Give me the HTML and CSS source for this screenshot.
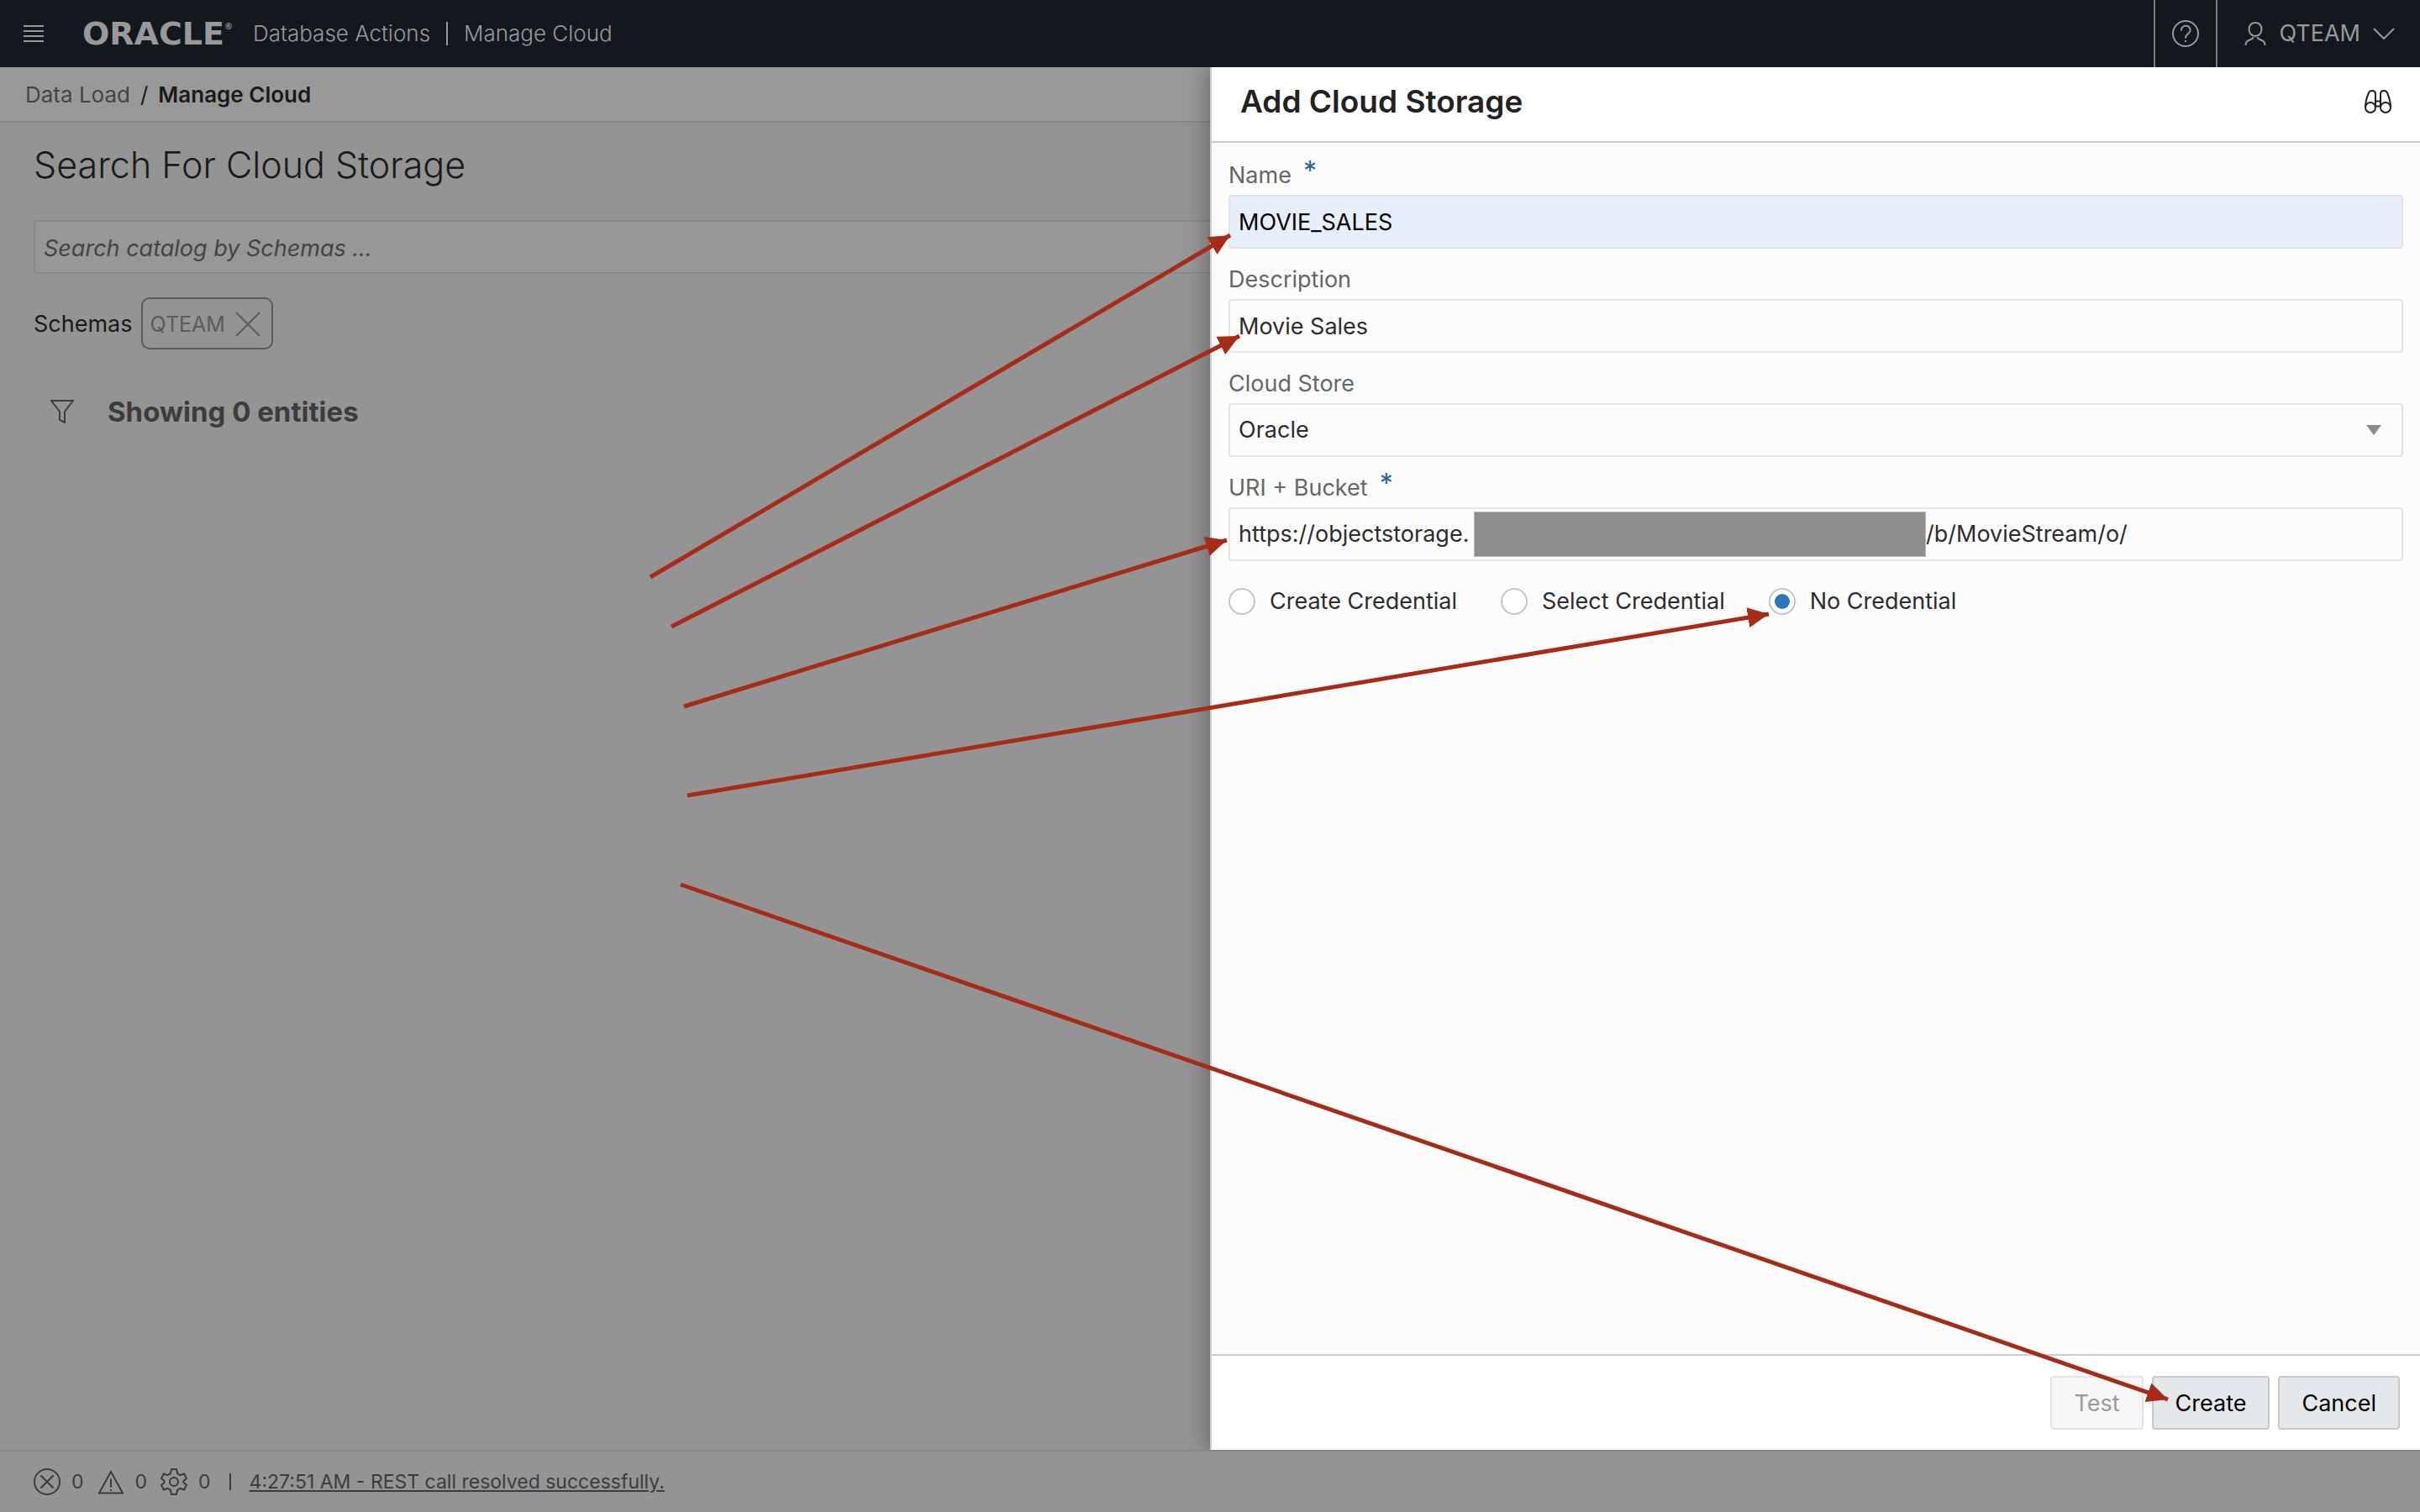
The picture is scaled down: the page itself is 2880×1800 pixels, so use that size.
FILE: index.html
```html
<!DOCTYPE html>
<html lang="en">
<head>
<meta charset="utf-8">
<title>Manage Cloud | Oracle Database Actions</title>
<meta name="viewport" content="width=device-width, initial-scale=1">
<link rel="stylesheet" href="styles.css">
</head>
<body>
<header class="topbar">
  <button class="icon-button menu" type="button" aria-label="Menu">
    <svg class="menu-icon" viewBox="0 0 24 20"><path d="M0 1h24M0 7h24M0 13h24M0 19h24"/></svg>
  </button>
  <span class="logo">ORACLE<sup class="logo-mark">®</sup></span>
  <span class="product">Database Actions</span>
  <span class="divider"></span>
  <span class="product">Manage Cloud</span>
  <div class="topbar-right">
    <button class="icon-button help" type="button" aria-label="Help">
      <svg class="icon-32" viewBox="0 0 32 32"><circle cx="16" cy="16" r="15"/><path d="M10.800 12.500C10.800 5 21.700 5 21.700 12C21.700 16 15.900 16 15.900 21.500M15.900 24v2"/></svg>
    </button>
    <button class="icon-button user" type="button">
      <svg class="user-icon" viewBox="0 0 26 28"><path d="M13 1C2.500 1 3.500 17 13 17S23.500 1 13 1ZM10.500 16.600C11 20 9 20.500 6.500 21.500C3.500 22.700 1.500 23.500 1.500 28M15.500 16.600C15 20 17 20.500 19.500 21.500C22.500 22.700 24.500 23.500 24.500 28"/></svg>
      <span>QTEAM</span>
      <svg class="chevron-icon" viewBox="0 0 26 14"><path d="M1 1l12 12L25 1"/></svg>
    </button>
  </div>
</header>

<main class="workspace">
  <section class="catalog">
    <nav class="breadcrumb" aria-label="Breadcrumb">
      <a class="crumb" href="#">Data Load</a>
      <span>/</span>
      <span class="crumb-current">Manage Cloud</span>
    </nav>
    <div class="catalog-body">
      <h1 class="catalog-title">Search For Cloud Storage</h1>
      <input class="search" type="text" aria-label="Search catalog" placeholder="Search catalog by Schemas ...">
      <div class="schemas">
        <span>Schemas</span>
        <button class="chip" type="button">QTEAM
          <svg class="close-icon" viewBox="0 0 30 30"><path d="M1 1l28 28M29 1L1 29"/></svg>
        </button>
      </div>
      <div class="results">
        <svg class="filter-icon" viewBox="0 0 28 28"><path d="M1 1h26L17 14v13l-6-3V14Z"/></svg>
        <h2 class="results-title">Showing 0 entities</h2>
      </div>
    </div>
  </section>

  <form class="drawer">
    <header class="drawer-header">
      <h2 class="drawer-title">Add Cloud Storage</h2>
      <button class="icon-button" type="button" aria-label="Tour">
        <svg class="binoculars-icon" viewBox="0 0 32 29"><circle cx="7" cy="21" r="6"/><circle cx="25" cy="21" r="6"/><path d="M1 21C1 14 3 8 5 3.500C6 1 7 1 9 1C12 1 13 2 13 5V21M31 21C31 14 29 8 27 3.500C26 1 25 1 23 1C20 1 19 2 19 5V21M13 13.500h6M13 19.500h6"/></svg>
      </button>
    </header>
    <div class="drawer-body">
      <div class="field">
        <label class="label" for="name">Name <span class="required">*</span></label>
        <input class="control control-filled" id="name" type="text" value="MOVIE_SALES">
      </div>
      <div class="field">
        <label class="label" for="description">Description</label>
        <input class="control" id="description" type="text" value="Movie Sales">
      </div>
      <div class="field">
        <label class="label" for="store">Cloud Store</label>
        <div class="select-wrap">
          <select class="control" id="store"><option>Oracle</option></select>
          <svg class="caret-icon" viewBox="0 0 18 12"><path d="M0 0h18l-9 12Z"/></svg>
        </div>
      </div>
      <div class="field">
        <label class="label" for="uri">URI + Bucket <span class="required">*</span></label>
        <div class="control uri">
          <input class="uri-host" id="uri" type="text" value="https://objectstorage.">
          <span class="redacted"></span>
          <input class="uri-path" type="text" aria-label="Bucket path" value="/b/MovieStream/o/">
        </div>
      </div>
      <div class="credentials">
        <label class="option"><input class="radio" type="radio" name="credential">Create Credential</label>
        <label class="option"><input class="radio" type="radio" name="credential">Select Credential</label>
        <label class="option"><input class="radio" type="radio" name="credential" checked>No Credential</label>
      </div>
    </div>
    <footer class="drawer-footer">
      <button class="button" type="button" disabled>Test</button>
      <button class="button" type="button">Create</button>
      <button class="button" type="button">Cancel</button>
    </footer>
  </form>
</main>

<footer class="statusbar">
  <span class="status-item"><svg class="icon-32" viewBox="0 0 32 32"><circle cx="16" cy="16" r="15"/><path d="M8.500 8.500l15 15M23.500 8.500l-15 15"/></svg>0</span>
  <span class="status-item"><svg class="icon-32" viewBox="0 0 32 32"><path d="M16 4L2 29.500h28ZM16 12.500v10M16 25v2"/></svg>0</span>
  <span class="status-item"><svg class="icon-32" viewBox="0 0 32 32"><circle cx="16" cy="16" r="5"/><path d="M13 1h6l1.200 5.200q2 .8 3.300 2L28.200 6.500L31 12l-3.500 3v2l3.500 3-2.800 5.500-4.700-1.700q-1.300 1.200-3.300 2L19 31h-6l-1.200-5.200q-2-.8-3.300-2L3.800 25.500L1 20l3.500-3v-2L1 12l2.800-5.500L8.500 8.200q1.300-1.200 3.300-2Z"/></svg>0</span>
  <span class="status-divider"></span>
  <a class="status-link" href="#">4:27:51 AM - REST call resolved successfully.</a>
</footer>

<svg class="callouts" viewBox="0 0 2880 1800" preserveAspectRatio="none" aria-hidden="true">
  <defs>
    <marker id="head" markerUnits="userSpaceOnUse" markerWidth="26" markerHeight="24" refX="25" refY="12" orient="auto"><path class="callout-head" d="M0 0L25 12L0 24Z"/></marker>
  </defs>
  <path d="M774 687L1464 280"/>
  <path d="M799 746L1475 400"/>
  <path d="M814 841L1460 643"/>
  <path d="M818 947L2105 731"/>
  <path d="M810 1053L2580 1666"/>
</svg>
</body>
</html>
```
FILE: styles.css
```css
*, *::before, *::after {
  box-sizing: border-box;
}

body {
  position: relative;
  display: grid;
  grid-template-rows: auto 1fr auto;
  min-height: 100vh;
  margin: 0;
  background: #949494;
  color: #1a1a1a;
  font-family: Inter, "Liberation Sans", sans-serif;
  font-size: 27px;
  line-height: 36px;
}

h1, h2 {
  margin: 0;
}

button, input, select {
  font: inherit;
}

svg {
  display: block;
  fill: none;
  stroke: currentColor;
  stroke-width: 2;
}

.icon-button {
  display: flex;
  align-items: center;
  padding: 0;
  border: 0;
  background: none;
  color: inherit;
}

.icon-32 {
  width: 32px;
  height: 32px;
}

/* Top bar */
.topbar {
  position: relative;
  z-index: 2;
  display: flex;
  align-items: center;
  height: 80px;
  padding-left: 28px;
  background: #13181f;
  color: #999;
}

.menu-icon {
  width: 24px;
  height: 20px;
}

.logo {
  display: flex;
  width: 203px;
  margin-left: 46px;
  font-family: "DejaVu Sans", sans-serif;
  font-size: 38px;
  font-weight: 700;
}

.logo-mark {
  font-size: 10px;
  line-height: 20px;
}

.product {
  font-size: 26px;
  font-weight: 300;
}

.divider {
  width: 2px;
  height: 28px;
  margin: 0 19px;
  background: #999;
}

.topbar-right {
  display: flex;
  align-self: stretch;
  margin-left: auto;
}

.help {
  width: 74px;
  padding: 0 20px;
  border-left: 2px solid #7d7d7d;
}

.user {
  gap: 15px;
  padding: 0 30px 0 32px;
  border-left: 2px solid #7d7d7d;
}

.user-icon {
  width: 26px;
  height: 28px;
}

.chevron-icon {
  width: 26px;
  height: 14px;
}

/* Workspace */
.workspace {
  display: grid;
  grid-template-columns: 1fr 1fr;
}

.breadcrumb {
  display: flex;
  align-items: center;
  gap: 12px;
  height: 66px;
  padding: 2px 0 0 30px;
  border-bottom: 2px solid #83888c;
  background: #999;
  font-size: 26px;
}

.crumb {
  color: #444;
  text-decoration: none;
}

.crumb-current {
  font-weight: 600;
}

.catalog-body {
  padding: 20px 0 0 40px;
}

.catalog-title {
  font-size: 43px;
  font-weight: 300;
  line-height: 60px;
}

.search {
  display: block;
  width: 100%;
  height: 64px;
  margin-top: 36px;
  padding: 2px 10px 0;
  border: 2px solid #8a8a8a;
  border-right: 0;
  border-radius: 4px 0 0 4px;
  background: #979797;
}

.search::placeholder {
  color: #444;
  font-style: italic;
}

.schemas {
  display: flex;
  align-items: baseline;
  gap: 10px;
  margin-top: 28px;
}

.chip {
  display: flex;
  align-items: center;
  gap: 12px;
  height: 62px;
  padding: 2px 13px 0 9px;
  border: 2px solid #5b5b5b;
  border-radius: 10px;
  background: none;
  color: #5b5b5b;
  font-size: 25px;
}

.close-icon {
  width: 30px;
  height: 30px;
}

.results {
  display: flex;
  align-items: center;
  gap: 40px;
  margin-top: 52px;
  padding-left: 20px;
  color: #3c3c3c;
}

.filter-icon {
  width: 28px;
  height: 28px;
}

.results-title {
  font-size: 33px;
  font-weight: 700;
  line-height: 44px;
}

/* Drawer */
.drawer {
  position: relative;
  display: flex;
  flex-direction: column;
  border-left: 2px solid #ccc;
  background: #fcfcfc;
  box-shadow: -4px 0 24px rgba(0, 0, 0, 0.3);
}

.drawer-header {
  display: flex;
  align-items: center;
  justify-content: space-between;
  height: 90px;
  padding: 0 34px 6px;
  border-bottom: 2px solid #ccc;
  background: #fff;
  color: #222;
}

.drawer-title {
  font-size: 37px;
  font-weight: 600;
}

.binoculars-icon {
  width: 32px;
  height: 29px;
}

.drawer-body {
  display: flex;
  flex: 1;
  flex-direction: column;
  gap: 14px;
  padding: 16px 20px;
}

.field {
  display: flex;
  flex-direction: column;
}

.label {
  display: flex;
  height: 46px;
  align-items: center;
  gap: 14px;
  color: #666;
}

.required {
  height: 46px;
  color: #2566a0;
  font-size: 32px;
}

.control {
  width: 100%;
  height: 64px;
  padding: 0 10px;
  border: 2px solid #e4e4e4;
  border-radius: 4px;
  background: #fcfcfc;
  color: #2c2c2c;
}

.control-filled {
  background: #e8effc;
  color: #000;
}

.select-wrap {
  position: relative;
}

select.control {
  appearance: none;
}

.caret-icon {
  position: absolute;
  top: 26px;
  right: 26px;
  width: 18px;
  height: 12px;
  fill: #8a8c8e;
  stroke: none;
}

.uri {
  display: flex;
  align-items: center;
}

.uri-host, .uri-path {
  padding: 0;
  border: 0;
  background: none;
  color: inherit;
}

.uri-host {
  width: 280px;
}

.uri-path {
  flex: 1;
}

.redacted {
  width: 538px;
  height: 54px;
  border: 1px solid #b8b8b8;
  background: #8f8f8f;
}

.credentials {
  display: flex;
  gap: 52px;
  padding-top: 16px;
  color: #2c2c2c;
}

.option {
  display: flex;
  align-items: center;
  gap: 17px;
}

.radio {
  display: grid;
  place-items: center;
  appearance: none;
  width: 32px;
  height: 32px;
  margin: 0;
  border: 2px solid #c4c4c4;
  border-radius: 50%;
  background: #fff;
}

.radio:checked::before {
  width: 18px;
  height: 18px;
  border-radius: 50%;
  background: #2f76c0;
  content: "";
}

.drawer-footer {
  display: flex;
  justify-content: flex-end;
  gap: 10px;
  padding: 24px;
  border-top: 2px solid #ccc;
  background: #fff;
}

.button {
  height: 64px;
  padding: 2px 26px 0;
  border: 2px solid #c4c8cb;
  border-radius: 4px;
  background: #e4e8eb;
  color: #000;
}

.button:disabled {
  border-color: #e4e4e4;
  background: #f6f6f6;
  color: #999;
}

/* Status bar */
.statusbar {
  position: relative;
  z-index: 2;
  display: flex;
  align-items: center;
  height: 74px;
  gap: 16px;
  padding-left: 40px;
  border-top: 2px solid #888;
  background: #949494;
  color: #3c3c3c;
  font-size: 23px;
}

.status-item {
  display: flex;
  align-items: center;
  gap: 13px;
}

.status-divider {
  width: 2px;
  height: 20px;
  margin: 0 6px;
  background: #3c3c3c;
}

.status-link {
  color: inherit;
}

/* Annotation arrows */
.callouts {
  position: absolute;
  z-index: 3;
  inset: 0;
  width: 100%;
  height: 100%;
  color: #a72c18;
  stroke-width: 5;
  pointer-events: none;
}

.callouts > path {
  marker-end: url(#head);
}

.callout-head {
  fill: #a72c18;
  stroke: none;
}
```
